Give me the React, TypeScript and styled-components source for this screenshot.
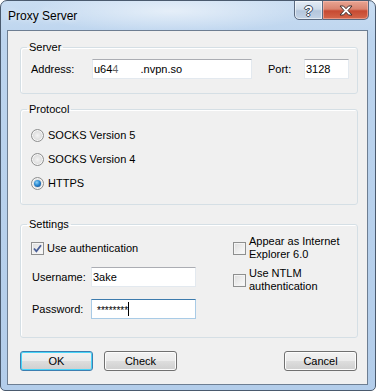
import React from 'react';
import styled, { createGlobalStyle, css } from 'styled-components';

const Global = createGlobalStyle`
    html, body {
        margin: 0;
        padding: 0;
        background: #ffffff;
    }
    body {
        font-family: "Liberation Sans", Arial, sans-serif;
        font-size: 11px;
        color: #000;
    }
`;

const Window = styled.div`
    box-sizing: border-box;
    width: 376px;
    height: 391px;
    display: flex;
    flex-direction: column;
    border: 1px solid #4a5a6e;
    border-radius: 7px 7px 5px 5px;
    background:
        radial-gradient(ellipse 140px 22px at 170px 10px, rgba(255, 255, 255, 0.55), rgba(255, 255, 255, 0)),
        linear-gradient(180deg, #c9ddf2 0%, #bcd4ee 10%, #b3cdea 100%);
    overflow: hidden;
`;

const TitleBar = styled.div`
    height: 29px;
    display: flex;
    align-items: flex-start;
    flex-shrink: 0;
`;

const Title = styled.div`
    font-family: "Liberation Sans", Arial, sans-serif;
    font-size: 12px;
    line-height: 16px;
    padding: 7px 0 0 7px;
    color: #000;
    text-shadow: 0 0 6px rgba(255, 255, 255, 0.9);
`;

const Caption = styled.div`
    margin-left: auto;
    margin-right: 6px;
    margin-top: -1px;
    display: flex;
    height: 20px;
`;

const CaptionButton = styled.div<{ $close?: boolean }>`
    box-sizing: border-box;
    height: 20px;
    display: flex;
    align-items: center;
    justify-content: center;
    border: 1px solid #5b6a80;
    ${(p) =>
        p.$close
            ? css`
                  width: 46px;
                  border-left: none;
                  border-radius: 0 0 5px 0;
                  background: linear-gradient(180deg, #e8a593 0%, #d98470 45%, #c74a32 55%, #d4664a 100%);
                  box-shadow: inset 0 0 0 1px rgba(255, 200, 190, 0.5);
              `
            : css`
                  width: 29px;
                  border-radius: 0 0 0 5px;
                  background: linear-gradient(180deg, #e4ecf5 0%, #cfdcea 45%, #b4c6dc 55%, #c3d3e6 100%);
                  box-shadow: inset 0 0 0 1px rgba(255, 255, 255, 0.55);
              `}
`;

const HelpGlyph = styled.span`
    font-family: "Liberation Sans", Arial, sans-serif;
    font-weight: bold;
    font-size: 14px;
    line-height: 14px;
    color: #fff;
    margin-top: 1px;
    text-shadow:
        1px 0 0 #3b4858, -1px 0 0 #3b4858, 0 1px 0 #3b4858, 0 -1px 0 #3b4858;
`;

const Client = styled.div`
    box-sizing: border-box;
    margin: 0 7px 0 6px;
    height: 355px;
    border: 1px solid #6d7e92;
    background: #f0f0f0;
    padding: 10px 9px 0 12px;
    display: flex;
    flex-direction: column;
`;

const Group = styled.fieldset<{ $h: number; $gap?: number }>`
    box-sizing: border-box;
    margin: ${(p) => p.$gap ?? 0}px 0 0 0;
    padding: 0;
    min-width: 0;
    height: ${(p) => p.$h}px;
    border: 1px solid #d5dfe5;
    border-radius: 3px;
    box-shadow: inset 1px 1px 0 #fff;
`;

const Legend = styled.legend`
    margin-left: 6px;
    padding: 0 2px;
    line-height: 13px;
    font-size: 11px;
`;

const GroupBody = styled.div<{ $pt: number }>`
    padding: ${(p) => p.$pt}px 0 0 10px;
`;

const Row = styled.div`
    display: flex;
    align-items: center;
`;

const Label = styled.span<{ $w: number }>`
    width: ${(p) => p.$w}px;
    flex-shrink: 0;
`;

const Field = styled.div<{ $w: number; $focus?: boolean }>`
    box-sizing: border-box;
    width: ${(p) => p.$w}px;
    height: 20px;
    background: #fff;
    border: 1px solid ${(p) => (p.$focus ? '#a9cbe6' : '#e3e9ef')};
    border-top-color: ${(p) => (p.$focus ? '#3d7bad' : '#abadb3')};
    padding: 0 1px;
    display: flex;
    align-items: center;
    white-space: nowrap;
    overflow: hidden;
`;

const Masked = styled.span`
    font-size: 10px;
    letter-spacing: 0;
    margin: 2px 0 0 4px;
`;

const Caret = styled.span`
    display: inline-block;
    width: 1px;
    height: 14px;
    margin-left: 0;
    background: #000;
`;

const Gap = styled.span<{ $w: number }>`
    display: inline-block;
    width: ${(p) => p.$w}px;
`;

const RadioRow = styled.div`
    height: 24px;
    display: flex;
    align-items: center;
`;

const Radio = styled.span<{ $on?: boolean }>`
    box-sizing: border-box;
    width: 13px;
    height: 13px;
    border-radius: 50%;
    border: 1px solid #8e8f8f;
    background: radial-gradient(circle at 50% 50%, #f4f4f4 0%, #dcdcdc 60%, #cfcfcf 100%);
    box-shadow: inset 0 0 0 1px #f8f8f8;
    margin-right: 4px;
    flex-shrink: 0;
    display: flex;
    align-items: center;
    justify-content: center;
    &::after {
        content: '';
        display: ${(p) => (p.$on ? 'block' : 'none')};
        width: 7px;
        height: 7px;
        border-radius: 50%;
        background: radial-gradient(circle at 40% 35%, #8fd2f6 0%, #2a8ad4 45%, #0d3c7a 100%);
    }
`;

const SettingsGrid = styled.div`
    display: grid;
    grid-template-columns: 202px 1fr;
    padding: 4px 0 0 10px;
`;

const LeftCol = styled.div`
    padding-top: 5px;
    display: flex;
    flex-direction: column;
`;

const RightCol = styled.div`
    display: flex;
    flex-direction: column;
    gap: 6px;
`;

const CheckRow = styled.label<{ $mt?: number }>`
    display: flex;
    align-items: center;
    margin-top: ${(p) => p.$mt ?? 0}px;
    min-height: 16px;
`;

const CheckText = styled.span`
    line-height: 13px;
`;

const Box = styled.span`
    box-sizing: border-box;
    width: 13px;
    height: 13px;
    border: 1px solid #8e8f8f;
    background: linear-gradient(135deg, #dcdcdc 0%, #f0f0f0 60%, #fbfbfb 100%);
    box-shadow: inset 0 0 0 1px #f4f4f4;
    margin-right: 3px;
    flex-shrink: 0;
    display: flex;
    align-items: center;
    justify-content: center;
`;

const FieldRow = styled(Row)<{ $mt: number }>`
    margin-top: ${(p) => p.$mt}px;
    padding-left: 1px;
`;

const Buttons = styled.div`
    display: flex;
    margin-top: 13px;
    margin-right: 1px;
    gap: 11px;
`;

const Button = styled.div<{ $default?: boolean; $right?: boolean }>`
    box-sizing: border-box;
    width: 73px;
    height: 20px;
    display: flex;
    align-items: center;
    justify-content: center;
    border-radius: 3px;
    border: 1px solid ${(p) => (p.$default ? '#3c7fb1' : '#707070')};
    background: linear-gradient(180deg, #f2f2f2 0%, #ebebeb 48%, #dddddd 52%, #cfcfcf 100%);
    box-shadow: inset 0 0 0 1px ${(p) => (p.$default ? '#48d4f8' : '#fcfcfc')};
    margin-left: ${(p) => (p.$right ? 'auto' : '0')};
`;

const Check = () => (
    <svg width="9" height="9" viewBox="0 0 9 9">
        <path d="M1 4.5 L3.4 7.4 L8 1.2" fill="none" stroke="#4a5f97" strokeWidth="1.8" />
    </svg>
);

const CloseGlyph = () => (
    <svg width="14" height="11" viewBox="0 0 14 11">
        <path
            d="M1 1 H4.5 L7 3.7 L9.5 1 H13 L9 5.5 L13 10 H9.5 L7 7.3 L4.5 10 H1 L5 5.5 Z"
            fill="#fff"
            stroke="#3f3030"
            strokeWidth="1"
            strokeLinejoin="round"
        />
    </svg>
);

const App = () => {
    return (
        <>
            <Global />
            <Window>
                <TitleBar>
                    <Title>Proxy Server</Title>
                    <Caption>
                        <CaptionButton>
                            <HelpGlyph>?</HelpGlyph>
                        </CaptionButton>
                        <CaptionButton $close>
                            <CloseGlyph />
                        </CaptionButton>
                    </Caption>
                </TitleBar>
                <Client>
                    <Group $h={53}>
                        <Legend>Server</Legend>
                        <GroupBody $pt={5}>
                            <Row>
                                <Label $w={61}>Address:</Label>
                                <Field $w={160}>
                                    u64<span style={{ opacity: 0.6 }}>4</span>
                                    <Gap $w={22} />
                                    .nvpn.so
                                </Field>
                                <Label $w={36} style={{ marginLeft: 16 }}>Port:</Label>
                                <Field $w={45}>3128</Field>
                            </Row>
                        </GroupBody>
                    </Group>

                    <Group $h={102} $gap={9}>
                        <Legend>Protocol</Legend>
                        <GroupBody $pt={7}>
                            <RadioRow>
                                <Radio />
                                SOCKS Version 5
                            </RadioRow>
                            <RadioRow>
                                <Radio />
                                SOCKS Version 4
                            </RadioRow>
                            <RadioRow>
                                <Radio $on />
                                HTTPS
                            </RadioRow>
                        </GroupBody>
                    </Group>

                    <Group $h={120} $gap={13}>
                        <Legend>Settings</Legend>
                        <SettingsGrid>
                            <LeftCol>
                                <CheckRow>
                                    <Box>
                                        <Check />
                                    </Box>
                                    Use authentication
                                </CheckRow>
                                <FieldRow $mt={11}>
                                    <Label $w={59}>Username:</Label>
                                    <Field $w={105}>3ake</Field>
                                </FieldRow>
                                <FieldRow $mt={12}>
                                    <Label $w={59}>Password:</Label>
                                    <Field $w={105} $focus>
                                        <Masked>********</Masked>
                                        <Caret />
                                    </Field>
                                </FieldRow>
                            </LeftCol>
                            <RightCol>
                                <CheckRow>
                                    <Box />
                                    <CheckText>
                                        Appear as Internet
                                        <br />
                                        Explorer 6.0
                                    </CheckText>
                                </CheckRow>
                                <CheckRow>
                                    <Box />
                                    <CheckText>
                                        Use NTLM
                                        <br />
                                        authentication
                                    </CheckText>
                                </CheckRow>
                            </RightCol>
                        </SettingsGrid>
                    </Group>

                    <Buttons>
                        <Button $default>OK</Button>
                        <Button>Check</Button>
                        <Button $right>Cancel</Button>
                    </Buttons>
                </Client>
            </Window>
        </>
    );
};

export default App;
